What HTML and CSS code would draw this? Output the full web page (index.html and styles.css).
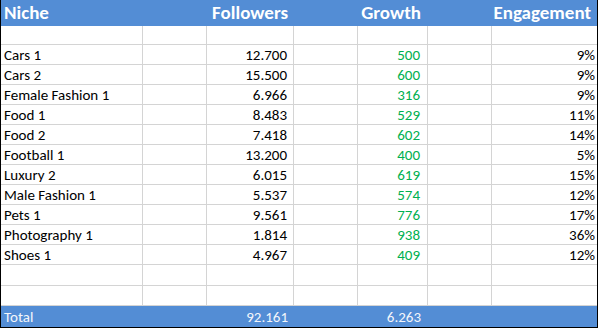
FILE: index.html
```html
<!DOCTYPE html>
<html>
<head>
<meta charset="utf-8">
<link rel="stylesheet" href="styles.css">
</head>
<body>
<div class="sheet">
  <div class="row head">
    <div class="c">Niche</div><div class="c"></div><div class="c r pf">Followers</div><div class="c"></div><div class="c r pg">Growth</div><div class="c"></div><div class="c r pe">Engagement</div>
  </div>
  <div class="row data first">
    <div class="c"></div><div class="c"></div><div class="c"></div><div class="c"></div><div class="c"></div><div class="c"></div><div class="c"></div>
  </div>
  <div class="row data"><div class="c">Cars 1</div><div class="c"></div><div class="c r pf">12.700</div><div class="c"></div><div class="c r pg g">500</div><div class="c"></div><div class="c r pv">9%</div></div>
  <div class="row data"><div class="c">Cars 2</div><div class="c"></div><div class="c r pf">15.500</div><div class="c"></div><div class="c r pg g">600</div><div class="c"></div><div class="c r pv">9%</div></div>
  <div class="row data"><div class="c">Female Fashion 1</div><div class="c"></div><div class="c r pf">6.966</div><div class="c"></div><div class="c r pg g">316</div><div class="c"></div><div class="c r pv">9%</div></div>
  <div class="row data"><div class="c">Food 1</div><div class="c"></div><div class="c r pf">8.483</div><div class="c"></div><div class="c r pg g">529</div><div class="c"></div><div class="c r pv">11%</div></div>
  <div class="row data"><div class="c">Food 2</div><div class="c"></div><div class="c r pf">7.418</div><div class="c"></div><div class="c r pg g">602</div><div class="c"></div><div class="c r pv">14%</div></div>
  <div class="row data"><div class="c">Football 1</div><div class="c"></div><div class="c r pf">13.200</div><div class="c"></div><div class="c r pg g">400</div><div class="c"></div><div class="c r pv">5%</div></div>
  <div class="row data"><div class="c">Luxury 2</div><div class="c"></div><div class="c r pf">6.015</div><div class="c"></div><div class="c r pg g">619</div><div class="c"></div><div class="c r pv">15%</div></div>
  <div class="row data"><div class="c">Male Fashion 1</div><div class="c"></div><div class="c r pf">5.537</div><div class="c"></div><div class="c r pg g">574</div><div class="c"></div><div class="c r pv">12%</div></div>
  <div class="row data"><div class="c">Pets 1</div><div class="c"></div><div class="c r pf">9.561</div><div class="c"></div><div class="c r pg g">776</div><div class="c"></div><div class="c r pv">17%</div></div>
  <div class="row data"><div class="c">Photography 1</div><div class="c"></div><div class="c r pf">1.814</div><div class="c"></div><div class="c r pg g">938</div><div class="c"></div><div class="c r pv">36%</div></div>
  <div class="row data"><div class="c">Shoes 1</div><div class="c"></div><div class="c r pf">4.967</div><div class="c"></div><div class="c r pg g">409</div><div class="c"></div><div class="c r pv">12%</div></div>
  <div class="row data tall">
    <div class="c"></div><div class="c"></div><div class="c"></div><div class="c"></div><div class="c"></div><div class="c"></div><div class="c"></div>
  </div>
  <div class="row data">
    <div class="c"></div><div class="c"></div><div class="c"></div><div class="c"></div><div class="c"></div><div class="c"></div><div class="c"></div>
  </div>
  <div class="row total">
    <div class="c">Total</div><div class="c"></div><div class="c r pf">92.161</div><div class="c"></div><div class="c r pg">6.263</div><div class="c"></div><div class="c"></div>
  </div>
</div>
</body>
</html>
```

FILE: styles.css
```css
html, body {
  margin: 0;
  padding: 0;
  background: #ffffff;
}

.sheet {
  width: 598px;
  box-sizing: border-box;
  border-left: 1px solid #000;
  border-right: 1px solid #000;
  border-bottom: 1px solid #000;
  font-family: Carlito, Lato, "Open Sans", sans-serif;
  font-size: 15px;
  color: #000;
}

.row {
  display: grid;
  grid-template-columns: 142px 64px 87px 64px 70px 64px 1fr;
}

.c {
  box-sizing: border-box;
  white-space: nowrap;
  overflow: hidden;
  padding-left: 3px;
}

.r {
  text-align: right;
  padding-left: 0;
}

.pf { padding-right: 6px; }
.pg { padding-right: 7px; }
.pv { padding-right: 2px; }
.pe { padding-right: 6px; }

.g { color: #00b050; }

.head {
  height: 26px;
  background: #538dd5;
  color: #ffffff;
  font-weight: bold;
  font-size: 19px;
  line-height: 26px;
}

.data {
  height: 20px;
  line-height: 19px;
}

.data .c {
  height: 20px;
  border-right: 1px solid #d4d4d4;
  border-bottom: 1px solid #d4d4d4;
  padding-top: 1px;
}

.data .c:last-child {
  border-right: none;
}

.data.first,
.data.first .c {
  height: 19px;
}

.data.tall,
.data.tall .c {
  height: 21px;
}

.total {
  height: 21px;
  background: #538dd5;
  color: #f4f6fb;
  line-height: 22px;
}
```
